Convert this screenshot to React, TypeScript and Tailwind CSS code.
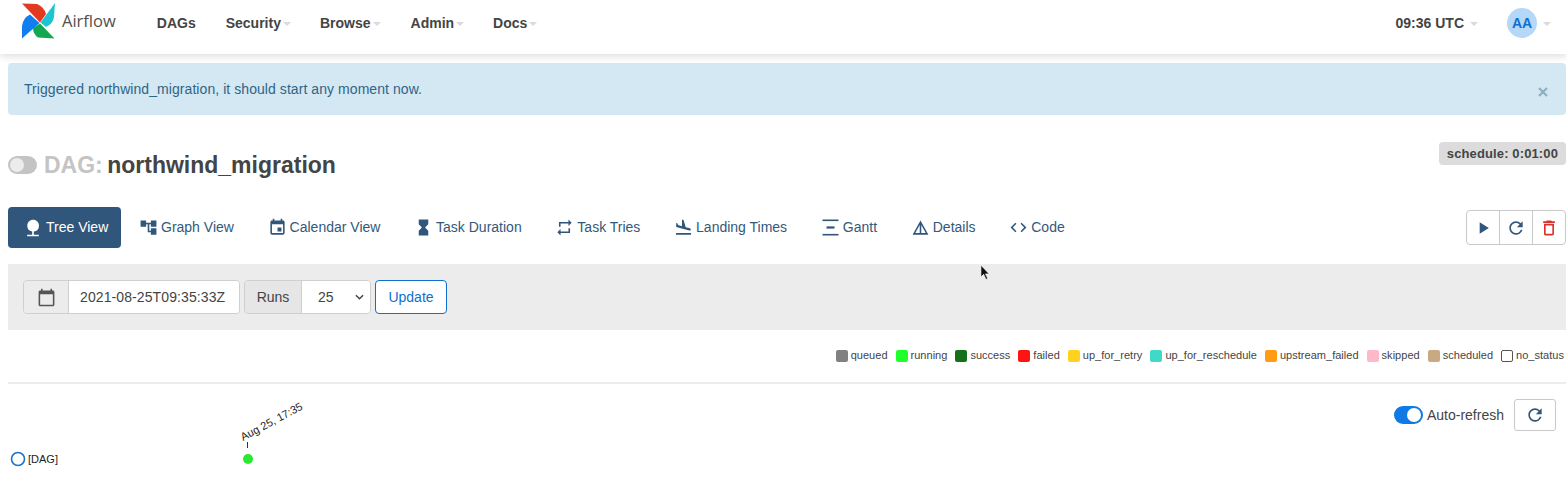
import {
  MdAccountTree,
  MdCalendarToday,
  MdCode,
  MdDeleteOutline,
  MdDetails,
  MdEvent,
  MdFlightLand,
  MdHourglassFull,
  MdNature,
  MdPlayArrow,
  MdRefresh,
  MdRepeat,
} from "react-icons/md";

function GanttIcon({ className }: { className?: string }) {
  return (
    <svg viewBox="0 0 19 19" className={className} fill="currentColor">
      <rect x="1.5" y="1.5" width="16" height="1.6" />
      <rect x="5.5" y="8.4" width="8" height="2.2" />
      <rect x="1.5" y="15.9" width="16" height="1.6" />
    </svg>
  );
}

const tabs = [
  { label: "Graph View", icon: MdAccountTree },
  { label: "Calendar View", icon: MdEvent },
  { label: "Task Duration", icon: MdHourglassFull },
  { label: "Task Tries", icon: MdRepeat },
  { label: "Landing Times", icon: MdFlightLand },
  { label: "Gantt", icon: GanttIcon },
  { label: "Details", icon: MdDetails },
  { label: "Code", icon: MdCode },
];

const legend = [
  { label: "queued", color: "bg-[#808080]" },
  { label: "running", color: "bg-[#1fff2a]" },
  { label: "success", color: "bg-[#15701a]" },
  { label: "failed", color: "bg-[#ff1414]" },
  { label: "up_for_retry", color: "bg-[#ffd21f]" },
  { label: "up_for_reschedule", color: "bg-[#40d9c8]" },
  { label: "upstream_failed", color: "bg-[#ff9c14]" },
  { label: "skipped", color: "bg-[#ffb8c8]" },
  { label: "scheduled", color: "bg-[#c8a982]" },
  { label: "no_status", color: "bg-white border border-[#555]" },
];

function Caret({ className = "ml-[2px]" }: { className?: string }) {
  return <span className={`inline-block w-0 h-0 border-x-[4px] border-x-transparent border-t-[4px] border-t-[#dcd8dc] translate-y-[1px] ${className}`} />;
}

function NavItem({ label, caret = true, className }: { label: string; caret?: boolean; className: string }) {
  return (
    <span className={`flex items-center text-[14px] font-bold text-[#444] ${className}`}>
      {label}
      {caret && <Caret />}
    </span>
  );
}

function Logo() {
  return (
    <svg viewBox="22 2 34 37" className="w-[34px] h-[37px] shrink-0 -mt-[5px]">
      <path d="M22 3.5 L37 4 Q44 7 46 14 L40 22.5 Z" fill="#e43921" />
      <path d="M55 3 L40.5 22.5 L46 27 Q53 24 54 17 Z" fill="#1fc4d4" />
      <path d="M54.5 38.5 L40 23.5 L33 28 Q33 34 38 37.5 Z" fill="#12a84f" />
      <path d="M22 38.5 L39.5 23 L30 14.5 Q23 18 22 26 Z" fill="#0f7ef0" />
    </svg>
  );
}

export default function App() {
  return (
    <div className="h-[493px] w-[1567px] overflow-hidden bg-white font-['Liberation_Sans',Arial,sans-serif] relative">
      {/* top nav */}
      <nav className="h-[54px] flex items-center bg-white shadow-[0_2px_8px_rgba(0,0,0,0.14)] pl-[22px] pr-[16px] pb-[8px] relative">
        <Logo />
        <span className="ml-[6px] -mt-[4px] text-[16.5px] text-[#51504f] font-['Open_Sans',sans-serif]">Airflow</span>
        <NavItem label="DAGs" caret={false} className="ml-[41px]" />
        <NavItem label="Security" className="ml-[30px]" />
        <NavItem label="Browse" className="ml-[29px]" />
        <NavItem label="Admin" className="ml-[30px]" />
        <NavItem label="Docs" className="ml-[29px]" />
        <span className="ml-auto flex items-center text-[14px] font-bold text-[#444]">
          09:36 UTC
          <Caret className="ml-[6px]" />
        </span>
        <span className="ml-[29px] w-[30px] h-[30px] rounded-full bg-[#b5d8f8] flex items-center justify-center text-[14px] font-bold text-[#0f6fd0]">AA</span>
        <Caret className="ml-[6px]" />
      </nav>

      <div className="px-[8px] pr-[1px]">
        {/* alert */}
        <div className="mt-[9px] h-[52px] rounded-[4px] bg-[#d3e8f3] flex items-center justify-between pl-[16px] pr-[18px] text-[14px] tracking-[0.065px] text-[#2f6585]">
          Triggered northwind_migration, it should start any moment now.
          <svg viewBox="0 0 10 10" className="w-[10px] h-[10px] mt-[5px]">
            <path d="M1 1 L9 9 M9 1 L1 9" stroke="#8fb0c0" strokeWidth="2.2" fill="none" />
          </svg>
        </div>

        {/* title */}
        <div className="mt-[25px] h-[50px] flex items-start justify-between">
          <div className="flex items-center h-[50px]">
            <span className="relative w-[29px] h-[18px] rounded-full bg-[#c4c4c4] mr-[7px]">
              <span className="absolute left-[2px] top-[2px] w-[14px] h-[14px] rounded-full bg-[#ececec]" />
            </span>
            <h3 className="text-[23px] font-bold text-[#444] leading-none whitespace-nowrap">
              <span className="text-[#c4c4c4] mr-[-2px]">DAG: </span>northwind_migration
            </h3>
          </div>
          <span className="mt-[2px] h-[23px] px-[8px] flex items-center rounded-[4px] bg-[#dcdcdc] text-[13px] tracking-[0.12px] font-bold text-[#444]">schedule: 0:01:00</span>
        </div>

        {/* tabs */}
        <div className="mt-[17px] h-[41px] flex items-center text-[14px] text-[#34587a]">
          <span className="w-[113px] h-[41px] rounded-[4px] bg-[#30567b] text-white flex items-center pl-[15px] mr-[18px]">
            <MdNature className="text-[20px] mr-[3px]" />
            Tree View
          </span>
          <div className="flex items-center gap-[33.7px]">
            {tabs.map((t) => {
              const Icon = t.icon;
              return (
                <span key={t.label} className="flex items-center whitespace-nowrap">
                  <Icon className="w-[19px] h-[19px] mr-[3px] text-[#30567b]" />
                  {t.label}
                </span>
              );
            })}
          </div>
          <div className="ml-auto flex h-[35px] w-[100px] rounded-[4px] border border-[#c9c9c9] text-[#30567b]">
            <span className="flex-1 flex items-center justify-center"><MdPlayArrow className="text-[20px]" /></span>
            <span className="flex-1 flex items-center justify-center border-x border-[#c9c9c9]"><MdRefresh className="text-[20px]" /></span>
            <span className="flex-1 flex items-center justify-center"><MdDeleteOutline className="text-[20px] text-[#d9332b]" /></span>
          </div>
        </div>

        {/* date filter bar */}
        <div className="mt-[16px] h-[66px] bg-[#ececec] flex items-center pl-[15px] text-[14px] text-[#444]">
          <div className="flex h-[34px] w-[217px] rounded-[4px] border border-[#cfcfcf] overflow-hidden">
            <span className="w-[45px] flex items-center justify-center border-r border-[#cfcfcf] bg-[#ececec]"><MdCalendarToday className="text-[19px] text-[#555]" /></span>
            <span className="flex-1 bg-white flex items-center pl-[11px] tracking-[0.1px]">2021-08-25T09:35:33Z</span>
          </div>
          <div className="ml-[4px] flex h-[34px] w-[127px] rounded-[4px] border border-[#cfcfcf] overflow-hidden">
            <span className="w-[57px] flex items-center justify-center border-r border-[#cfcfcf] bg-[#e6e6e6]">Runs</span>
            <span className="flex-1 bg-white flex items-center justify-between pl-[16px] pr-[6px]">
              25
              <svg viewBox="0 0 10 6" className="w-[9px] h-[6px]"><path d="M1 1 L5 5 L9 1" fill="none" stroke="#444" strokeWidth="1.6" /></svg>
            </span>
          </div>
          <span className="ml-[4px] h-[34px] w-[72px] rounded-[4px] border border-[#0f6fd0] bg-white text-[#0f6fd0] flex items-center justify-center">Update</span>
        </div>

        {/* legend */}
        <div className="mt-[19px] h-[13px] flex items-center justify-end gap-[8px] pr-[2px] text-[11px] tracking-[0.025px] text-[#444]">
          {legend.map((l) => (
            <span key={l.label} className="flex items-center gap-[3px]">
              <span className={`w-[12px] h-[12px] rounded-[2px] ${l.color}`} />
              {l.label}
            </span>
          ))}
        </div>

        <div className="mt-[20px] h-[2px] bg-[#ececec]" />

        {/* auto refresh */}
        <div className="mt-[15px] flex items-center justify-end pr-[10px] text-[14px] text-[#444]">
          <span className="relative w-[29px] h-[18px] rounded-full bg-[#0f7ae5] mr-[4px]">
            <span className="absolute right-[2px] top-[2px] w-[14px] h-[14px] rounded-full bg-white" />
          </span>
          Auto-refresh
          <span className="ml-[10px] w-[42px] h-[32px] rounded-[3px] border border-[#c9c9c9] flex items-center justify-center">
            <MdRefresh className="text-[20px] text-[#30567b]" />
          </span>
        </div>
      </div>

      {/* tree diagram */}
      <svg className="absolute left-0 top-[393px] w-[320px] h-[100px]" viewBox="0 393 320 100">
        <circle cx="18" cy="459" r="6.5" fill="white" stroke="#1a73d1" strokeWidth="1.6" />
        <text x="28" y="463" fontSize="11" fill="#222">[DAG]</text>
        <line x1="247.5" y1="442" x2="247.5" y2="448" stroke="#333" strokeWidth="1" />
        <circle cx="248" cy="459" r="5" fill="#2ae830" />
        <text x="243" y="441" fontSize="11" fill="#222" transform="rotate(-28 243 441)">Aug 25, 17:35</text>
      </svg>

      {/* mouse pointer */}
      <svg viewBox="0 0 12 18" className="absolute left-[980px] top-[264px] w-[11px] h-[17px]">
        <path d="M1 1 L1 14 L4 11 L6.5 16.5 L8.5 15.5 L6 10.5 L10 10.5 Z" fill="#111" stroke="#fff" strokeWidth="0.7" />
      </svg>
    </div>
  );
}
